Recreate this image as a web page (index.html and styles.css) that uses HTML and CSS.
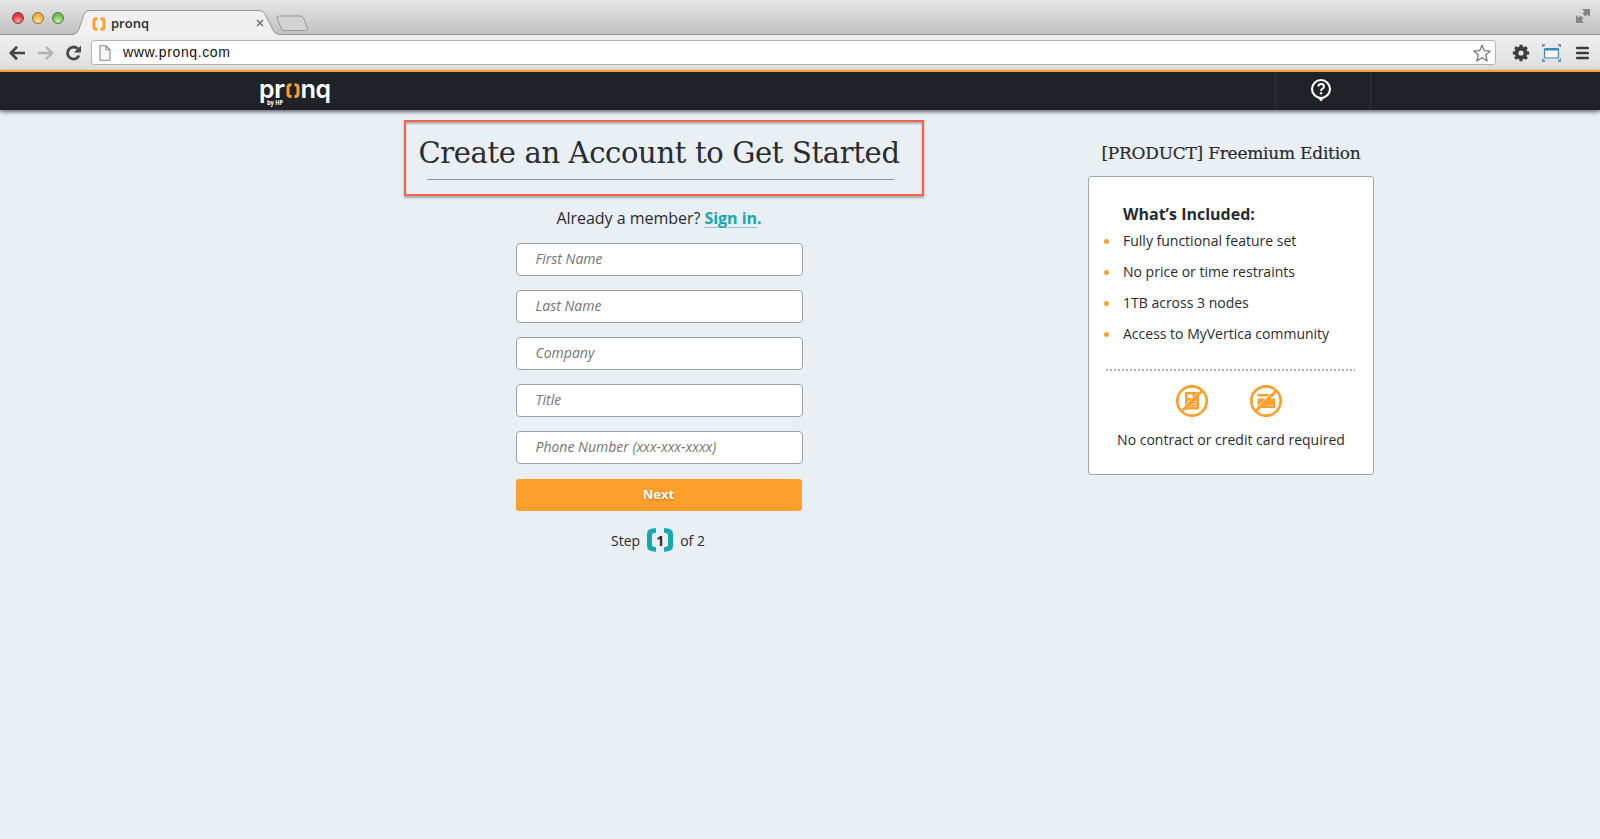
FILE: index.html
```html
<!DOCTYPE html>
<html lang="en">
<head>
<meta charset="utf-8">
<title>pronq</title>
<link rel="stylesheet" href="styles.css">
</head>
<body>
<header class="browser">
  <div class="tabbar">
    <div class="lights"><i class="light red"></i><i class="light yellow"></i><i class="light green"></i></div>
    <div class="tab">
      <svg class="tab-shape" width="210" height="25" viewBox="0 0 210 25">
        <path d="M0 25C5 24 6 22 8 16L12 4Q13.500 .5 18 .5H187Q191 .5 193 4L201 20Q203 24.500 209 24.500V25Z" fill="#f0f0f0"/>
        <path d="M0 24.500C5 24 6 22 8 16L12 4Q13.500 .5 18 .5H187Q191 .5 193 4L201 20Q203 24.500 209 24.500" fill="none" stroke="#969696"/>
      </svg>
      <svg class="favicon" width="14" height="14" viewBox="0 0 14 14"><path d="M5.500 1.700H4Q2 1.700 2 4V10Q2 12.300 4 12.300H5.500M8.500 1.700H10Q12 1.700 12 4V10Q12 12.300 10 12.300H8.500" fill="none" stroke="#ff9f2d" stroke-width="3"/></svg>
      <span class="tab-title">pronq</span>
      <svg class="tab-close" width="8" height="8" viewBox="0 0 8 8"><path d="M1 1L7 7M7 1L1 7" stroke="#777" stroke-width="1.700"/></svg>
    </div>
    <svg class="newtab" width="33" height="17" viewBox="0 0 33 17"><path d="M3.500 1H24Q26.500 1 27.500 3L31.500 13Q32.200 15.500 29.500 15.500H9Q6 15.500 5 13L1.200 3.500Q.5 1 3.500 1Z" fill="#d3d3d3" stroke="#999"/></svg>
    <svg class="expand" width="16" height="16" viewBox="0 0 16 16" fill="#858585"><path d="M7 1H15V9L12.500 6.500L10.500 8.500L7.500 5.500L9.500 3.500Z"/><path d="M1 7V15H9L6.500 12.500L8.500 10.500L5.500 7.500L3.500 9.500Z"/></svg>
  </div>
  <div class="toolbar">
    <svg class="nav-icons" width="72" height="18" viewBox="0 0 72 18" fill="none" stroke-linejoin="miter">
      <path d="M1.500 9H16M8 2.800L1.800 9L8 15.200" stroke="#444" stroke-width="2.700"/>
      <path d="M29 9H43M37 2.800L43.200 9L37 15.200" stroke="#b5b5b5" stroke-width="2.400"/>
      <path d="M70 11.500A6 6 0 1 1 68.700 4.700" stroke="#484848" stroke-width="2.800"/><path d="M72 1.500V8.500H65Z" fill="#484848"/>
    </svg>
    <div class="address">
      <svg width="12" height="16" viewBox="0 0 12 16"><path d="M1 .8H7L11 4.800V15.200H1ZM7 .8V4.800H11" fill="#f6f6f6" stroke="#8a8a8a" stroke-width="1.100"/></svg>
      <span class="url">www.pronq.com</span>
      <svg class="star" width="18" height="18" viewBox="0 0 18 18"><path d="M9 1L11.300 6.700L17.300 7.100L12.700 11L14.200 17L9 13.700L3.800 17L5.300 11L.7 7.100L6.700 6.700Z" fill="#fff" stroke="#747474" stroke-width="1.200" stroke-linejoin="round"/></svg>
    </div>
    <svg class="gear" width="18" height="18" viewBox="0 0 18 18"><circle cx="9" cy="9" r="4.500" fill="none" stroke="#3d3d3d" stroke-width="3.800"/><path d="M9 .8V3.500M9 14.500V17.200M.8 9H3.500M14.500 9H17.200M3.200 3.200L5 5M13 13L14.800 14.800M3.200 14.800L5 13M13 5L14.800 3.200" stroke="#3d3d3d" stroke-width="3.200"/></svg>
    <svg class="window" width="19" height="18" viewBox="0 0 19 18" fill="none" stroke="#3f87bb"><rect x="2.500" y="4.500" width="14" height="9.500" rx="1" fill="#f3f6f8" stroke-width="1.200"/><path d="M2.500 5.500H16.500" stroke-width="2"/><path d="M.7 3V1H3M16 1H18.300V3M.7 14.500V17H3M16 17H18.300V14.500" stroke-width="1.300"/></svg>
    <svg class="menu" width="13" height="14" viewBox="0 0 13 14"><path d="M1.300 2H11.700M1.300 7H11.700M1.300 12H11.700" stroke="#3d3d3d" stroke-width="2.700" stroke-linecap="round"/></svg>
  </div>
</header>
<nav class="sitebar">
  <svg class="logo" width="72" height="30" viewBox="0 0 72 30">
    <g class="logo-word"><text x="-1" y="16" textLength="15.500" lengthAdjust="spacingAndGlyphs">p</text><text x="14" y="16" textLength="11" lengthAdjust="spacingAndGlyphs">r</text><text x="40.500" y="16" textLength="15.500" lengthAdjust="spacingAndGlyphs">n</text><text x="55.500" y="16" textLength="15.500" lengthAdjust="spacingAndGlyphs">q</text></g>
    <path d="M31.500 2.700H31Q28 2.700 28 5.500V11.800Q28 14.600 31 14.600H31.500M34.500 2.700H35Q38 2.700 38 5.500V11.800Q38 14.600 35 14.600H34.500" fill="none" stroke="#ff9f2d" stroke-width="3"/>
    <text class="logo-by" x="7" y="22.500" textLength="16" lengthAdjust="spacingAndGlyphs">by HP</text>
  </svg>
  <div class="help">
    <svg width="22" height="24" viewBox="0 0 22 24"><path d="M7 19L11 23.500L15 19Z" fill="#fff"/><circle cx="11" cy="11" r="9" fill="#1f2327" stroke="#fff" stroke-width="2.100"/><path d="M8.300 8.500Q8.500 6 11.200 6Q14 6 14 8.500Q14 10 12.300 10.800Q11 11.500 11 13" fill="none" stroke="#fff" stroke-width="1.900"/><circle cx="11" cy="15.300" r="1.200" fill="#fff"/></svg>
  </div>
</nav>
<main class="content">
  <section class="signup">
    <div class="headline"><h1>Create an Account to Get Started</h1></div>
    <div class="form-column">
      <p class="member">Already a member? <a class="signin"><span>Sign in</span>.</a></p>
      <form class="form">
        <input class="field" placeholder="First Name">
        <input class="field" placeholder="Last Name">
        <input class="field" placeholder="Company">
        <input class="field" placeholder="Title">
        <input class="field" placeholder="Phone Number (xxx-xxx-xxxx)">
        <button class="next" type="button">Next</button>
      </form>
      <div class="steps"><span>Step</span>
        <span class="step-no"><svg width="9" height="26" viewBox="0 0 10 26"><path d="M10 0V5Q5.500 5 5.500 8V18Q5.500 21 10 21V26Q0 26 0 20V6Q0 0 10 0Z" fill="#11a8b1"/></svg><b>1</b><svg width="9" height="26" viewBox="0 0 10 26"><path d="M0 0V5Q4.500 5 4.500 8V18Q4.500 21 0 21V26Q10 26 10 20V6Q10 0 0 0Z" fill="#11a8b1"/></svg></span>
        <span>of 2</span></div>
    </div>
  </section>
  <aside class="offer">
    <h2>[PRODUCT] Freemium Edition</h2>
    <div class="card">
      <h3>What’s Included:</h3>
      <ul class="features">
        <li>Fully functional feature set</li>
        <li>No price or time restraints</li>
        <li>1TB across 3 nodes</li>
        <li>Access to MyVertica community</li>
      </ul>
      <div class="dots"></div>
      <div class="badges">
        <svg width="32" height="32" viewBox="0 0 32 32"><path d="M9 7H23V24.500H9Z" fill="#ff9f2d"/><path d="M11.500 9.500H16.500V13H11.500Z" fill="#fff"/><path d="M11.500 16.500H21M11.500 19H21M11.500 21.500H21M19 10H21" stroke="#fff" stroke-width=".6"/><path d="M4.500 25L25 4.500" stroke="#fff" stroke-width=".8"/><path d="M5.500 26.500L26.500 5.500" stroke="#ff9f2d" stroke-width="2.700"/><circle cx="16" cy="16" r="14.700" fill="none" stroke="#ff9f2d" stroke-width="2.700"/></svg>
        <svg width="32" height="32" viewBox="0 0 32 32"><path d="M7.500 9H24V11.500H7.500ZM7.500 13.500H25V23H7.500Z" fill="#ff9f2d"/><path d="M9 20.500H14M16 20.500H23" stroke="#fff" stroke-width=".8" opacity=".6"/><path d="M4.500 25L25 4.500" stroke="#fff" stroke-width=".8"/><path d="M5.500 26.500L26.500 5.500" stroke="#ff9f2d" stroke-width="2.700"/><circle cx="16" cy="16" r="14.700" fill="none" stroke="#ff9f2d" stroke-width="2.700"/></svg>
      </div>
      <p class="note">No contract or credit card required</p>
    </div>
  </aside>
</main>
</body>
</html>
```

FILE: styles.css
```css
* { box-sizing: border-box; }
body { margin: 0; min-height: 839px; background: #eaeff4; color: #272c30; font-family: "Open Sans", sans-serif; overflow: hidden; }
svg { display: block; flex: none; }
h1, h2, h3, p, ul { margin: 0; padding: 0; font-weight: 400; }

.tabbar { display: flex; height: 35px; padding-left: 12px; background: linear-gradient(#e7e7e7, #c0c0c0); border-bottom: 1px solid #969696; }
.lights { display: flex; gap: 8px; margin-top: 12px; }
.light { width: 12px; height: 12px; border: 1px solid; border-radius: 50%; }
.red { background: radial-gradient(circle at 50% 80%, #ffaaa5, #e24343 55%, #c62f36); border-color: #963238; }
.yellow { background: radial-gradient(circle at 50% 80%, #ffe89b, #eeb44c 55%, #dd9a35); border-color: #9a7033; }
.green { background: radial-gradient(circle at 50% 80%, #ccf5a5, #78c355 55%, #5ba742); border-color: #54813d; }
.tab { position: relative; display: flex; width: 210px; height: 25px; margin: 10px 0 0 8px; padding-left: 20px; }
.tab-shape { position: absolute; left: 0; top: 0; }
.favicon, .tab-title, .tab-close { position: relative; }
.favicon { margin-top: 7px; }
.tab-title { margin-left: 5px; font-size: 13px; font-weight: 600; line-height: 26px; }
.tab-close { margin: 9px 18px 0 auto; }
.newtab { margin: 15px 0 0 -6px; }
.expand { margin: 8px 9px 0 auto; }

.toolbar { display: flex; align-items: center; height: 35px; padding: 0 11px 0 9px; background: linear-gradient(#efefef, #dedede); }
.address { display: flex; align-items: center; flex: 1; height: 25px; margin: 0 16px 0 10px; padding: 0 4px 0 7px; background: #fff; border: 1px solid #b4b4b4; border-radius: 3px; }
.url { margin: -2px 0 0 12px; color: #111; font: 14px "Liberation Sans", Arial, sans-serif; letter-spacing: .6px; }
.star { margin-left: auto; }
.window { margin: 0 15px 0 12px; }

.sitebar { display: flex; height: 40px; padding-left: 260px; background: #1f2327; border-top: 2px solid #ff9f2d; box-shadow: 0 2px 4px rgba(30, 35, 40, .65); }
.logo { margin-top: 10px; overflow: visible; }
.logo-word { fill: #fff; font: 600 25.5px Inter, sans-serif; }
.logo-by { fill: #fff; font: 700 6.500px "Open Sans", sans-serif; }
.help { display: flex; justify-content: center; width: 96px; margin-left: 943px; padding-top: 6px; border: solid #2d3236; border-width: 0 1px; }
.help svg { margin-right: 5px; }

.content { display: flex; padding-left: 404px; }
.signup { width: 520px; padding-top: 10px; }
.form-column { display: flex; flex-direction: column; align-items: center; width: 510px; }
.headline { width: 520px; height: 76px; padding: 12px 12px 0; border: 2px solid #fb624c; box-shadow: 0 2px 2px rgba(60, 70, 75, .4), inset 0 2px 2px rgba(60, 70, 75, .35); }
h1 { height: 46px; margin: 0 16px 0 9px; padding-right: 3px; border-bottom: 1px solid #8d959a; font: 29px/38px "DejaVu Serif", serif; letter-spacing: -.35px; white-space: nowrap; display: flex; justify-content: center; }
.member { margin-top: 10px; font-size: 16px; line-height: 24px; letter-spacing: -.03px; }
.signin { color: #17a7b0; font-weight: 700; }
.signin span { border-bottom: 1px solid #7fc9cf; display: inline-block; line-height: 18px; }
.form { display: flex; flex-direction: column; gap: 14px; width: 287px; margin-top: 13px; }
.field { width: 287px; height: 33px; padding: 0 19px 2px; border: 1px solid #9ca3a9; border-radius: 4px; background: #fff; outline: 0; font: italic 14px "Open Sans", sans-serif; }
.field::placeholder { color: #757575; opacity: 1; }
.next { width: 286px; height: 32px; margin-top: 1px; padding: 0 0 2px; border: 0; border-radius: 3px; background: #ffa02d; color: #fff; font: 700 13px "Open Sans", sans-serif; text-shadow: 0 1px 2px rgba(110, 65, 10, .5); }
.steps { display: flex; align-items: center; gap: 7px; height: 26px; margin: 16px 2px 0 0; font-size: 14px; }
.step-no { display: flex; align-items: center; justify-content: space-between; width: 26px; }
.step-no b { font-weight: 700; }

.offer { width: 286px; margin-left: 164px; padding-top: 30px; }
h2 { height: 36px; font: 17px/26px "DejaVu Serif", serif; letter-spacing: -.24px; -webkit-text-stroke: .2px #272c30; white-space: nowrap; display: flex; justify-content: center; }
.card { height: 299px; padding: 25px 17px 0; background: #fff; border: 1px solid #a0a7ac; border-radius: 3px; }
h3 { padding-left: 17px; font-size: 16px; font-weight: 700; line-height: 24px; }
.features { margin-top: -1px; list-style: none; }
.features li { display: flex; align-items: center; height: 31px; font-size: 14px; }
.features li::before { content: ""; width: 5px; height: 5px; margin: 2px 14px 0 -2px; border-radius: 50%; background: #ff9f2d; }
.dots { width: 249px; height: 2px; margin-top: 20px; background: repeating-linear-gradient(90deg, #aeb2b6 0 2px, transparent 2px 4px); }
.badges { display: flex; justify-content: center; gap: 42px; margin: 14px 4px 0 0; }
.note { margin-top: 13px; text-align: center; font-size: 14px; line-height: 20px; white-space: nowrap; }
```
